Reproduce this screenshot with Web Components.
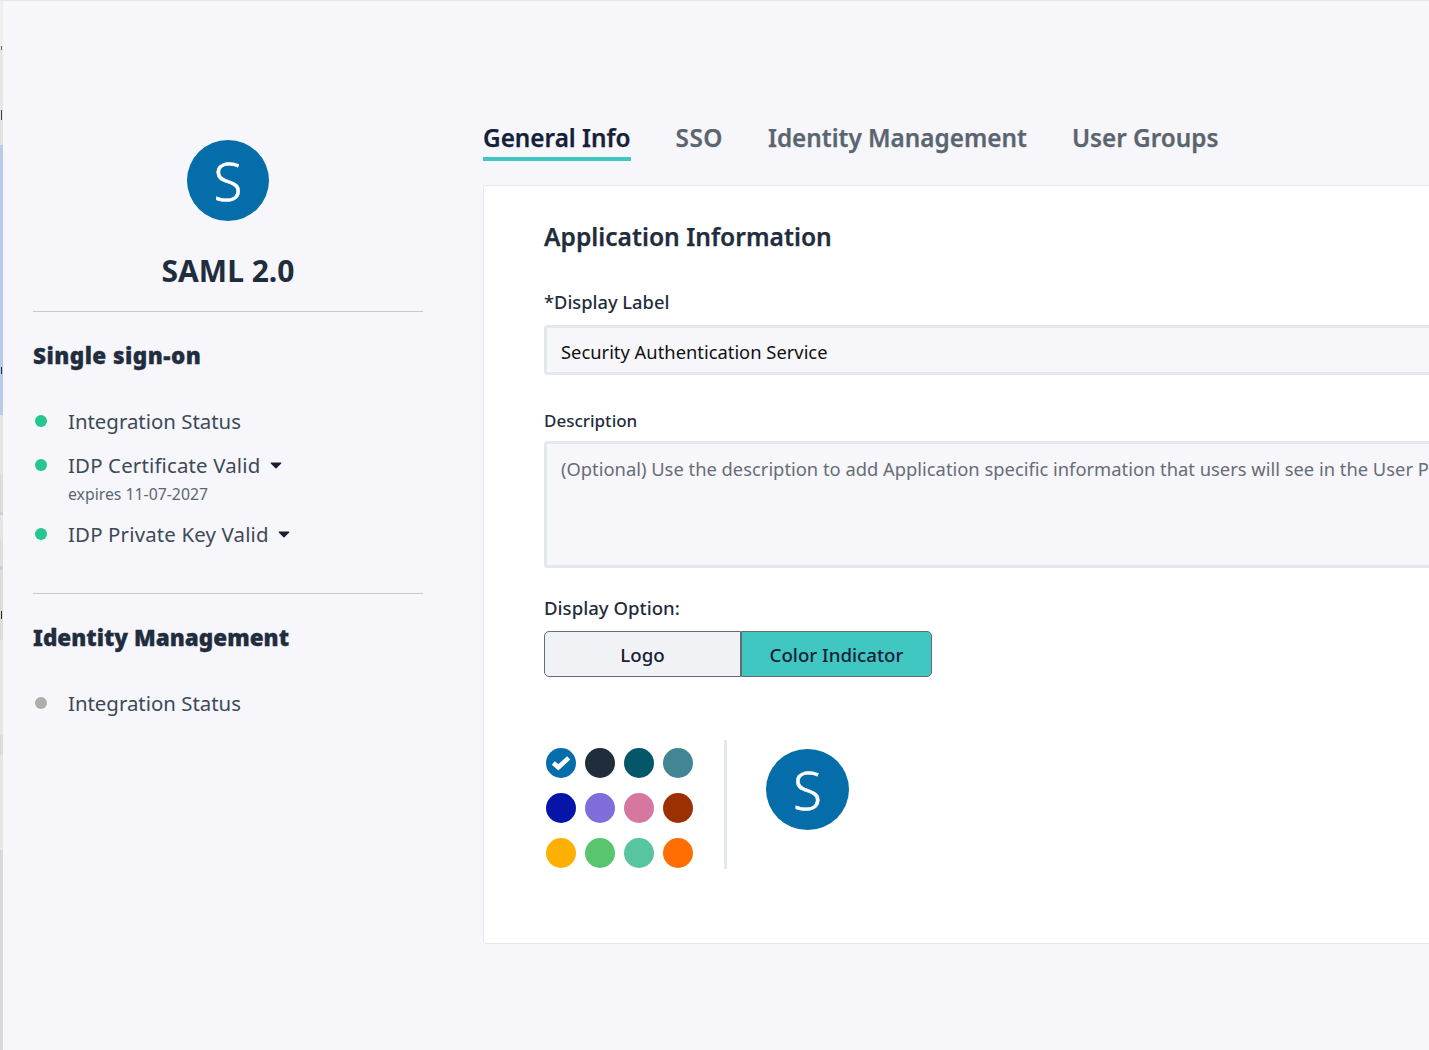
<!DOCTYPE html>
<html lang="en">
<head>
<meta charset="utf-8">
<title>SAML 2.0</title>
<style>
   html, body { margin: 0; height: 100%; overflow: hidden; background: #f6f6fb; }
   body { font-family: "Noto Sans", sans-serif; color: #1f2d3d; }
</style>
</head>
<body>
<app-page></app-page>

<script>
// small helper, every element here is just a template + open shadow root
function define(name, html) {
   const tmpl = document.createElement("template");
   tmpl.innerHTML = html;
   customElements.define(name, class extends HTMLElement {
      constructor() {
         super();
         this.attachShadow({ mode: "open" });
         this.shadowRoot.appendChild(tmpl.content.cloneNode(true));
      }
   });
}

define("app-avatar", `
   <style>
      :host {
         display: flex;
         align-items: center;
         justify-content: center;
         inline-size: 82px;
         block-size: 81px;
         border-radius: 50%;
         background: #046daa;
         color: #fff;
         font: 300 53px/1 "Noto Sans", sans-serif;
         -webkit-text-stroke: 0.5px #fff;
      }
   </style>
   <slot></slot>
`);

define("status-item", `
   <style>
      :host {
         display: grid;
         grid-template-columns: 35px auto;
         align-items: center;
         color: #3c4a57;
         font-size: 20.4px;
         line-height: 28px;
      }
      #dot {
         inline-size: 12px;
         block-size: 12px;
         margin-inline-start: 2px;
         border-radius: 50%;
         background: var(--dot-color, #25c78f);
      }
      #sub {
         grid-column: 2;
         color: #5b6670;
         font-size: 15.8px;
         line-height: 20px;
         letter-spacing: normal;
      }
   </style>
   <span id="dot"></span>
   <span><slot></slot></span>
   <span id="sub"><slot name="sub"></slot></span>
`);

define("caret-down", `
   <style>
      :host { display: inline-block; margin-inline-start: 4px; vertical-align: 4px; }
      svg { display: block; }
   </style>
   <svg width="12" height="7" viewBox="0 0 13 8"><path d="M1 .6h11a.7.7 0 0 1 .5 1.2L7 7.2a.8.8 0 0 1-1.1 0L.5 1.8A.7.7 0 0 1 1 .6z" fill="#162033"/></svg>
`);

define("side-bar", `
   <style>
      :host {
         display: block;
         flex: none;
         box-sizing: border-box;
         inline-size: 480px;
         padding: 139px 60px 0 30px;
      }
      #head {
         display: flex;
         flex-direction: column;
         align-items: center;
         padding-block-end: 20px;
         border-block-end: 1px solid #c9cad0;
      }
      h1 {
         margin: 30px 0 0;
         color: #1f2d3d;
         font-size: 30px;
         line-height: 40px;
         font-weight: 700;
      }
      h2 {
         margin: 0;
         color: #1f2d3d;
         font-size: 22.5px;
         line-height: 32px;
         font-weight: 900;
         -webkit-text-stroke: 0.3px #1f2d3d;
      }
      #sso { padding-block: 28px 45px; border-block-end: 1px solid #c9cad0; }
      #sso h2 { letter-spacing: 0.45px; }
      #idm { padding-block-start: 28px; }
      .list { display: flex; flex-direction: column; gap: 16px; margin-block-start: 35px; }
      .wide { letter-spacing: 0.17px; }
      .sub-gap { display: block; padding-block-start: 5px; }
   </style>
   <div id="head">
      <app-avatar>S</app-avatar>
      <h1>SAML 2.0</h1>
   </div>
   <section id="sso">
      <h2>Single sign-on</h2>
      <div class="list">
         <status-item>Integration Status</status-item>
         <status-item class="wide">IDP Certificate Valid <caret-down></caret-down><span slot="sub" class="sub-gap">expires 11-07-2027</span></status-item>
         <status-item class="wide">IDP Private Key Valid <caret-down></caret-down></status-item>
      </div>
   </section>
   <section id="idm">
      <h2>Identity Management</h2>
      <div class="list">
         <status-item style="--dot-color:#b0aeab">Integration Status</status-item>
      </div>
   </section>
`);

define("tab-bar", `
   <style>
      :host {
         display: flex;
         gap: 45px;
         block-size: 64px;
         color: #5a6570;
         font-size: 24.3px;
         line-height: 33px;
         font-weight: 600;
         -webkit-text-stroke: 0.25px currentColor;
      }
      span { box-sizing: border-box; block-size: 40px; white-space: nowrap; }
      .active { color: #152136; border-block-end: 4px solid #41c7c1; }
      .sso { letter-spacing: 0.5px; }
   </style>
   <span class="active">General Info</span>
   <span class="sso">SSO</span>
   <span>Identity Management</span>
   <span>User Groups</span>
`);

define("form-field", `
   <style>
      :host { display: block; }
      label {
         display: block;
         color: #1f2d3d;
         font-size: 18.3px;
         line-height: 26px;
         font-weight: 500;
      }
      :host([area]) label { font-size: 17px; }
      #box {
         box-sizing: border-box;
         margin-block-start: 10px;
         padding: 0 14px;
         border: 3px solid #e3e8ea;
         border-radius: 3px;
         background: #f6f6fb;
         color: #111;
         font-size: 18.35px;
         white-space: nowrap;
         overflow: hidden;
      }
      :host([area]) #box { block-size: 127px; padding-block-start: 11px; color: #666d75; line-height: 28px; margin-block-start: 7px; }
      :host(:not([area])) #box { block-size: 50px; line-height: 48px; }
   </style>
   <label><slot name="label"></slot></label>
   <div id="box"><slot></slot></div>
`);

define("toggle-group", `
   <style>
      :host {
         display: grid;
         grid-template-columns: 197px 191px;
         inline-size: 388px;
         block-size: 46px;
         font-size: 18.7px;
         font-weight: 500;
         color: #152136;
      }
      span {
         display: flex;
         align-items: center;
         justify-content: center;
         box-sizing: border-box;
         border: 1px solid #626c76;
      }
      #a { background: #f1f2f5; border-radius: 5px 0 0 5px; }
      #b { background: #41c7c1; border-radius: 0 5px 5px 0; }
   </style>
   <span id="a">Logo</span>
   <span id="b">Color Indicator</span>
`);

define("color-swatches", `
   <style>
      :host {
         display: grid;
         grid-template-columns: repeat(4, 30px);
         grid-auto-rows: 30px;
         gap: 15px 9px;
      }
      span {
         display: flex;
         align-items: center;
         justify-content: center;
         border-radius: 50%;
      }
   </style>
   <span style="background:#046daa">
      <svg width="20" height="16" viewBox="0 0 19 15"><path d="M2.2 7.4 7 11.6 16.8 2.6" fill="none" stroke="#fff" stroke-width="4.4"/></svg>
   </span>
   <span style="background:#202d3a"></span>
   <span style="background:#035768"></span>
   <span style="background:#428696"></span>
   <span style="background:#0615a8"></span>
   <span style="background:#806cdb"></span>
   <span style="background:#d5779e"></span>
   <span style="background:#9c3002"></span>
   <span style="background:#ffb000"></span>
   <span style="background:#59c66f"></span>
   <span style="background:#58c5a1"></span>
   <span style="background:#ff6d03"></span>
`);

define("info-card", `
   <style>
      :host {
         display: block;
         box-sizing: border-box;
         inline-size: 1100px;
         block-size: 759px;
         padding: 33px 60px 0;
         border: 1px solid #e8e8ec;
         border-radius: 3px;
         background: #fff;
      }
      h3 {
         margin: 0 0 34px;
         color: #1f2d3d;
         font-size: 24.6px;
         line-height: 36px;
         font-weight: 600;
         -webkit-text-stroke: 0.25px #1f2d3d;
      }
      form-field + form-field { margin-block-start: 33px; }
      #opt {
         margin-block-start: 27px;
         font-size: 18.6px;
         line-height: 26px;
         font-weight: 500;
         color: #1f2d3d;
      }
      toggle-group { margin-block-start: 10px; }
      #colors { display: flex; align-items: flex-start; margin-block-start: 63px; }
      color-swatches { margin: 8px 0 0 2px; }
      #rule { inline-size: 3px; block-size: 129px; margin: 0 39px 0 31px; background: #e3e8ea; }
      #colors app-avatar { margin-block-start: 9px; inline-size: 83px; }
   </style>
   <h3>Application Information</h3>
   <form-field><span slot="label">*Display Label</span>Security Authentication Service</form-field>
   <form-field area><span slot="label">Description</span>(Optional) Use the description to add Application specific information that users will see in the User Portal</form-field>
   <div id="opt">Display Option:</div>
   <toggle-group></toggle-group>
   <div id="colors">
      <color-swatches></color-swatches>
      <div id="rule"></div>
      <app-avatar>S</app-avatar>
   </div>
`);

// the sliver of the page behind this panel, still visible on the left edge
define("edge-strip", `
   <style>
      :host {
         display: flex;
         flex-direction: column;
         flex: none;
         inline-size: 3px;
         block-size: 1050px;
         background: #e4e4e5;
      }
      span { display: block; flex: none; }
      .mark { background: linear-gradient(90deg, var(--bg) 33%, var(--ink) 33%, var(--ink) 80%, var(--bg) 80%); }
   </style>
   <span style="block-size:45px;background:#efefef"></span>
   <span class="mark" style="block-size:4px;--bg:#e9e9e9;--ink:#666"></span>
   <span style="block-size:60px;background:#e6e6e6"></span>
   <span class="mark" style="block-size:10px;--bg:#e4e4e4;--ink:#39414d"></span>
   <span style="block-size:25px;background:#e2e2e2"></span>
   <span style="block-size:222px;background:#b9cbe6"></span>
   <span class="mark" style="block-size:7px;--bg:#b9cbe6;--ink:#1f2d3d"></span>
   <span style="block-size:41px;background:#b9cbe6"></span>
   <span style="block-size:60px;background:#e4e4e5"></span>
   <span style="block-size:37px;background:#dcdcdd"></span>
   <span style="block-size:3px;background:#ccd2d2"></span>
   <span style="block-size:25px;background:#e4e4e5"></span>
   <span style="block-size:26px;background:#dedede"></span>
   <span style="block-size:4px;background:#ccd2d2"></span>
   <span style="block-size:41px;background:#dcdcdd"></span>
   <span class="mark" style="block-size:8px;--bg:#dcdcdd;--ink:#3a2a18"></span>
   <span style="block-size:21px;background:#dcdcdd"></span>
   <span style="block-size:95px;background:#e6e6e7"></span>
   <span style="block-size:20px;background:#dcdcdd"></span>
   <span style="block-size:95px;background:#e6e6e7"></span>
   <span style="block-size:200px;background:#d9d9db"></span>
`);

define("app-page", `
   <style>
      :host {
         display: flex;
         block-size: 1050px;
         overflow: hidden;
         box-sizing: border-box;
         border-block-start: 1px solid #e6e6ea;
      }
      main { padding-block-start: 120px; }
   </style>
   <edge-strip></edge-strip>
   <side-bar></side-bar>
   <main>
      <tab-bar></tab-bar>
      <info-card></info-card>
   </main>
`);
</script>
</body>
</html>
